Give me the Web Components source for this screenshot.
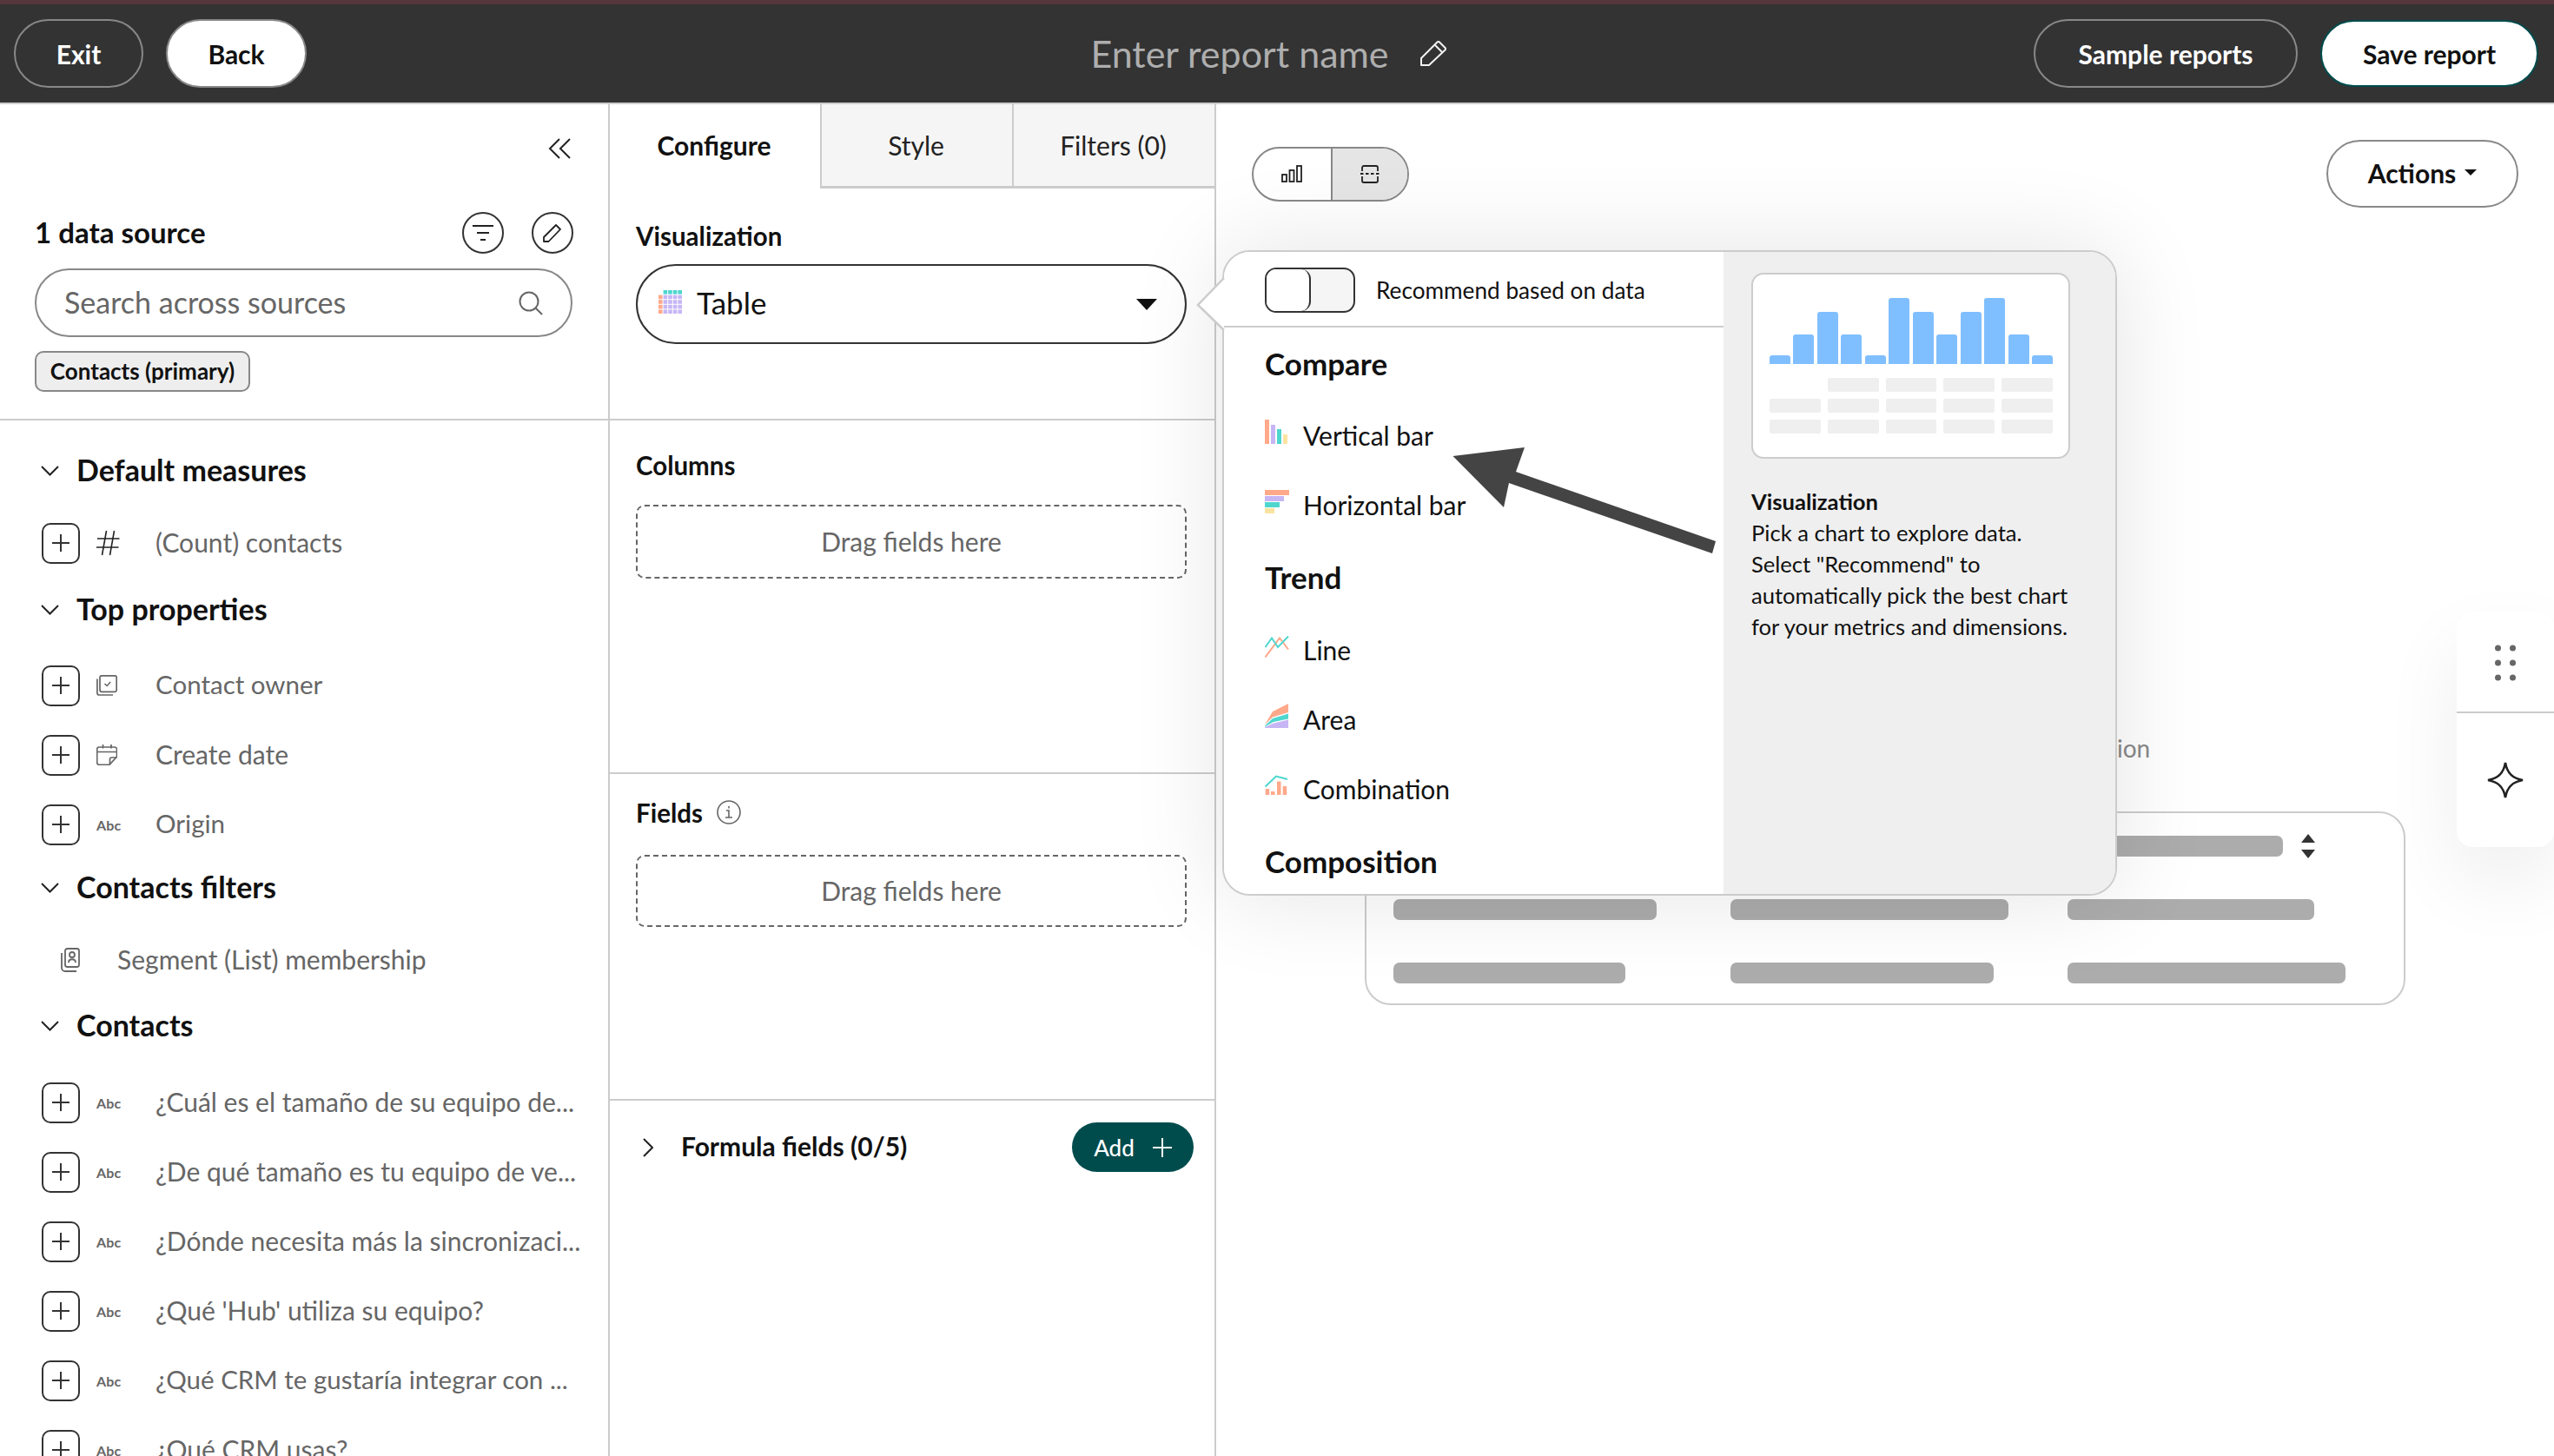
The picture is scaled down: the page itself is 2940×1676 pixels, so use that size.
<!DOCTYPE html>
<html lang="en"><head><meta charset="utf-8"><title>Report builder</title>
<style>
html,body{margin:0;padding:0;background:#fff}
body{width:2940px;height:1676px;overflow:hidden;position:relative;font-family:Lato,"Liberation Sans",sans-serif;color:#111}
</style></head><body>
<script>
function def(name,css,html){
  customElements.define(name,class extends HTMLElement{
    constructor(){super();this.attachShadow({mode:'open'});}
    connectedCallback(){ if(this._r)return; this._r=1;
      const h=typeof html==='function'?html(this):html;
      this.shadowRoot.innerHTML='<style>'+css+'</style>'+h;}
  });
}
const PLUS='<svg width="22" height="22" viewBox="0 0 22 22"><path d="M11 1v20M1 11h20" stroke="#333" stroke-width="2" fill="none"/></svg>';
const CHEV='<svg width="21" height="12" viewBox="0 0 21 12"><path d="M1 1l9.5 9.5L20 1" stroke="#222" stroke-width="2" fill="none"/></svg>';
const ICONS={
 hash:'<svg width="27" height="30" viewBox="0 0 27 30"><path d="M11.5 1L6.5 29M20.5 1l-5 28M1 10h25.500M0 20h25.500" stroke="#222" stroke-width="1.6" fill="none"/></svg>',
 owner:'<svg width="24" height="24" viewBox="0 0 24 24" fill="none" stroke="#666" stroke-width="1.7"><rect x="4" y=".8" width="19.200" height="18.500" rx="2"/><path d="M.9 4.500V20.500a2.500 2.500 0 0 0 2.500 2.500H19"/><path d="M9.500 10l2.700 2.500 4-4.500" stroke-width="1.500"/></svg>',
 date:'<svg width="24" height="24" viewBox="0 0 24 24" fill="none" stroke="#666" stroke-width="1.7"><path d="M3 3h18a2.500 2.500 0 0 1 2.500 2.500V14L15 23.300H3A2.500 2.500 0 0 1 .7 21V5.500A2.500 2.500 0 0 1 3 3Z"/><path d="M7.500 0v4.500M17 0v4.500M.8 8.500h22.700M23.500 15h-6a2 2 0 0 0-2 2v6"/></svg>',
 segment:'<svg width="22" height="28" viewBox="0 0 22 28" fill="none" stroke="#666" stroke-width="1.8"><rect x="5" y="1" width="16" height="21" rx="2.5"/><path d="M1 6v17a4 4 0 0 0 4 4h13"/><circle cx="13" cy="8" r="3"/><path d="M9 17c0-5 8-5 8 0"/></svg>',
 abc:'<span style="font:700 16px Lato,sans-serif;color:#666;letter-spacing:.2px">Abc</span>'
};
def('x-pill',`:host{display:inline-flex;align-items:center;justify-content:center;box-sizing:border-box;height:79px;border-radius:40px;border:2px solid #888;font:700 30px Lato,sans-serif;color:#fff;white-space:nowrap}
:host([light]){background:#fff;color:#111}
:host([save]){border-color:#004c4d;height:77px}
:host([plain]){background:#fff;color:#111;height:78px;padding-bottom:3px}`,`<slot></slot>`);

def('x-app-header',`:host{display:grid;grid-template-columns:1fr auto 1fr;align-items:center;box-sizing:border-box;height:120px;background:#333;border-top:5px solid #55363c;border-bottom:2px solid #ccc;padding:0 18px 0 16px}
.l,.r{display:flex;gap:26px;align-items:center}.r{justify-content:flex-end}
.c{display:flex;align-items:center;gap:36px;padding-right:18px;color:#aeaeae;font-size:43px;white-space:nowrap}`,
`<div class="l"><slot name="left"></slot></div><div class="c"><slot name="title"></slot><svg width="30" height="29" viewBox="0 0 30 29" fill="none" stroke="#f2f2f2" stroke-width="2" stroke-linejoin="round"><path d="M1 20L19.500 1.500a1.800 1.800 0 0 1 2.500 0l6.500 6.500a1.800 1.800 0 0 1 0 2.500L10 28H1z"/><path d="M17 5l8 8"/></svg></div><div class="r"><slot name="right"></slot></div>`);

def('x-round-icon',`:host{display:flex;align-items:center;justify-content:center;width:48px;height:48px;box-sizing:border-box;border:2px solid #333;border-radius:50%}`,`<slot></slot>`);

def('x-search',`:host{display:flex;align-items:center;justify-content:space-between;box-sizing:border-box;height:79px;width:619px;border:2px solid #888;border-radius:40px;padding:0 32px 0 32px;font-size:34px;color:#666}
span{display:block;margin-top:-3px}`,
`<span><slot></slot></span><svg width="28" height="28" viewBox="0 0 28 28" fill="none" stroke="#666" stroke-width="2"><circle cx="12" cy="12" r="10.5"/><path d="M19.5 19.5L27 27"/></svg>`);

def('x-chip',`:host{display:inline-flex;align-items:center;justify-content:center;box-sizing:border-box;height:47px;width:248px;background:#eee;border:2px solid #888;border-radius:10px;font:700 26px Lato,sans-serif;color:#111;white-space:nowrap;padding-bottom:2px}`,`<slot></slot>`);

def('x-source-head',`:host{display:block;box-sizing:border-box;height:364px;border-bottom:2px solid #ccc;padding:39px 40px 0 40px}
.collapse{display:flex;justify-content:flex-end;height:24px;padding-right:3px}
.row{display:flex;align-items:center;justify-content:space-between;margin-top:61px;height:48px;font:700 33px Lato,sans-serif;color:#111}
.h{display:block;margin-top:-3px}
.btns{display:flex;gap:32px}
.s{margin-top:17px}.c{margin-top:16px}`,
`<div class="collapse"><svg width="26" height="24" viewBox="0 0 26 24" fill="none" stroke="#222" stroke-width="2"><path d="M13 1L2 12l11 11M25 1L14 12l11 11"/></svg></div>
<div class="row"><span class="h"><slot name="heading"></slot></span><div class="btns"><x-round-icon><svg width="24" height="20" viewBox="0 0 24 20"><path d="M0 2h24M5 10h14M9 18h6" stroke="#222" stroke-width="2"/></svg></x-round-icon><x-round-icon><svg width="24" height="24" viewBox="0 0 24 24" fill="none" stroke="#222" stroke-width="1.8" stroke-linejoin="round"><path d="M2 17L16 3l5 5L7.500 22H2z"/></svg></x-round-icon></div></div>
<div class="s"><slot name="search"></slot></div><div class="c"><slot name="chip"></slot></div>`);

def('x-section-title',`:host{display:flex;align-items:center;height:60px;padding-left:47px;font:700 34px Lato,sans-serif;color:#111;white-space:nowrap}
svg{margin-right:20px}
span{display:block;margin-top:-3px}`,CHEV+`<span><slot></slot></span>`);

def('x-field-row',`:host{display:flex;align-items:center;height:80px;padding-left:48px;font-size:30px;color:#666;white-space:nowrap}
:host([segment]){padding-left:70px}
.plus{display:flex;align-items:center;justify-content:center;width:44px;height:47px;box-sizing:border-box;border:2px solid #333;border-radius:10px;flex:none}
.ic{flex:none;padding-left:19px;box-sizing:border-box;display:flex;align-items:center;width:87px}
:host([segment]) .ic{width:65px;padding-left:0}
.t{display:block;margin-top:-3px}`,
el=>{const t=el.getAttribute('type');const seg=t==='segment';
 if(seg)el.setAttribute('segment','');
 return (seg?'':'<div class="plus">'+PLUS+'</div>')+'<div class="ic">'+ICONS[t]+'</div><span class="t"><slot></slot></span>';});

def('x-source-panel',`:host{display:block;box-sizing:border-box;border-right:2px solid #ccc;overflow:hidden;height:100%}
.list{display:block;padding-top:28px}`,`<slot name="head"></slot><div class="list"><slot></slot></div>`);

def('x-tabs',`:host{display:grid;grid-template-columns:242px 221px 1fr;height:97px;box-sizing:border-box;font-size:30px}`,`<slot></slot>`);
def('x-tab',`:host{display:flex;align-items:center;justify-content:center;box-sizing:border-box;background:#f5f5f5;border-left:2px solid #ccc;border-bottom:3px solid #ccc;color:#222;white-space:nowrap;padding-right:2px}
:host([active]){background:#fff;border:none;font-weight:700;color:#111;padding:0 2px 3px 0}`,`<slot></slot>`);

def('x-config-section',`:host{display:block;box-sizing:border-box;border-bottom:2px solid #ccc;padding:var(--pt) 32px 0 30px}
.label{display:flex;align-items:center;height:40px;gap:16px;font:700 29.5px Lato,sans-serif;color:#111;margin-bottom:var(--gap)}`,
`<div class="label"><slot name="label"></slot></div><slot></slot>`);

def('x-drop-zone',`:host{display:flex;align-items:center;justify-content:center;box-sizing:border-box;width:634px;height:85px;border:2px dashed #666;border-radius:10px;font-size:30px;color:#666;white-space:nowrap}
span{display:block;margin-top:-2px}`,`<span><slot></slot></span>`);

function tableIcon(){let r='';
 for(let y=0;y<5;y++)for(let x=0;x<5;x++){ if(y===0&&x===0)continue;
  const col=y===0?'#4fd6cf':(x===0?'#ffa98a':'#c7b6f5');
  r+=`<rect x="${x*5.6}" y="${y*5.6}" width="4.6" height="4.6" fill="${col}"/>`;}
 return `<svg width="27" height="27" viewBox="0 0 27 27">${r}</svg>`;}
def('x-select',`:host{display:flex;align-items:center;box-sizing:border-box;width:634px;height:92px;border:2.5px solid #333;border-radius:46px;padding:0 32px 0 24px;font-size:35px;color:#111}
.i{margin:-6px 17px 0 0;display:flex}
.t{flex:1;margin-top:-4px}`,
`<span class="i">${tableIcon()}</span><span class="t"><slot></slot></span><svg width="24" height="13" viewBox="0 0 24 13"><path d="M0 0h24L12 13z" fill="#111"/></svg>`);

def('x-formula',`:host{display:flex;align-items:center;justify-content:space-between;padding:25px 24px 0 38px;font:700 30px Lato,sans-serif;color:#111;white-space:nowrap}
.l{display:flex;align-items:center;gap:32px}
.x{display:block;margin-top:-3px}`,
`<div class="l"><svg width="12" height="22" viewBox="0 0 12 22" fill="none" stroke="#222" stroke-width="2"><path d="M1 1l10 10L1 21"/></svg><span class="x"><slot></slot></span></div><slot name="action"></slot>`);
def('x-add',`:host{display:flex;align-items:center;justify-content:center;gap:21px;width:140px;height:57px;border-radius:29px;background:#004c4d;color:#fff;font:500 26px Lato,sans-serif}`,
`<slot></slot><svg width="22" height="22" viewBox="0 0 22 22"><path d="M11 0v22M0 11h22" stroke="#fff" stroke-width="2"/></svg>`);

def('x-config-panel',`:host{display:block;box-sizing:border-box;border-right:2px solid #ccc;overflow:hidden;height:100%}`,`<slot></slot>`);

def('x-view-toggle',`:host{display:grid;grid-template-columns:1fr 1fr;box-sizing:border-box;width:181px;height:63px;border:2.5px solid #888;border-radius:32px;overflow:hidden}
div{display:flex;align-items:center;justify-content:center}
.b{background:#e5e5e5;border-left:2px solid #888}`,
`<div><svg width="24" height="20" viewBox="0 0 24 20" fill="none" stroke="#222" stroke-width="1.8"><rect x="1" y="11" width="5" height="8"/><rect x="9.5" y="6" width="5" height="13"/><rect x="18" y="1" width="5" height="18"/></svg></div>
<div class="b"><svg width="22" height="21" viewBox="0 0 22 21" fill="none" stroke="#222" stroke-width="1.8"><path d="M2 7V3a2 2 0 0 1 2-2h14a2 2 0 0 1 2 2v4M2 13v5a2 2 0 0 0 2 2h14a2 2 0 0 0 2-2v-5"/><path d="M0 10h22" stroke-dasharray="3.5 2.5"/></svg></div>`);

def('x-skeleton-table',`:host{display:grid;grid-template-columns:388px 388px 1fr;row-gap:49px;box-sizing:border-box;width:1198px;height:223px;border:2.5px solid #ccc;border-radius:30px;padding:26px 0 0 31px;align-content:start}`,`<slot></slot>`);
def('x-bar',`:host{display:flex;align-items:center;gap:21px;height:24px}
i{display:block;height:24px;width:var(--w);background:#acacac;border-radius:7px}`,
el=>`<i></i>`+(el.hasAttribute('sort')?'<svg width="16" height="28" viewBox="0 0 16 28"><path d="M8 0l8 10H0zM0 18h16L8 28z" fill="#333"/></svg>':''));

def('x-canvas',`:host{display:block;padding:41px 41px 0;box-sizing:border-box;height:100%}
.top{display:flex;justify-content:space-between;align-items:center;height:78px}
.msg{margin:602px 0 0 996px;height:40px;line-height:40px;font-size:28px;color:#888}
.tbl{margin:53px 0 0 130px}`,
`<div class="top"><slot name="toggle"></slot><slot name="actions"></slot></div><div class="msg"><slot name="msg"></slot></div><div class="tbl"><slot></slot></div>`);

def('x-option',`:host{display:flex;align-items:center;height:80px;font-size:30px;color:#111;white-space:nowrap}
.i{width:44px;flex:none;display:flex;align-items:center;margin-top:-8px}`,
el=>{const s={
 v:'<svg width="28" height="28" viewBox="0 0 28 28"><rect x="0" width="5" height="28" fill="#ffa98a"/><rect x="7" y="6" width="5" height="22" fill="#c7b6f5"/><rect x="14" y="11" width="5" height="17" fill="#4fd6cf"/><rect x="21" y="17" width="5" height="11" fill="#fbe3a0"/></svg>',
 h:'<svg width="28" height="27" viewBox="0 0 28 27"><rect width="28" height="6" fill="#ffa98a"/><rect y="7" width="22" height="6" fill="#c7b6f5"/><rect y="14" width="17" height="6" fill="#4fd6cf"/><rect y="21" width="11" height="6" fill="#fbe3a0"/></svg>',
 l:'<svg width="28" height="25" viewBox="0 0 28 25" fill="none" stroke-width="2"><path d="M.5 24.500L17 2.500l10 13" stroke="#ffa98a"/><path d="M.5 13L8 2.500 15 13 27 .5" stroke="#4fd6cf"/></svg>',
 a:'<svg width="28" height="28" viewBox="0 0 28 28"><path d="M0 24L9 9 27 0V10L9 15.500 0 24Z" fill="#ffa98a"/><path d="M0 25.500L9 17 27 11.500V17.500L10 21 0 26.500Z" fill="#4fd6cf"/><path d="M0 28V27L10 22.500 27 18.500V28Z" fill="#c7b6f5"/></svg>',
 c:'<svg width="27" height="24" viewBox="0 0 27 24"><path d="M.5 13.500L13 1.500l13 3.500" fill="none" stroke="#4fd6cf" stroke-width="2"/><rect x=".7" y="16" width="4.500" height="7" fill="#ffa98a"/><rect x="7" y="19" width="4.500" height="4" fill="#ffa98a"/><rect x="14" y="7.500" width="4.500" height="15.500" fill="#ffa98a"/><rect x="20.700" y="13" width="4.500" height="10" fill="#ffa98a"/></svg>'
 }[el.getAttribute('icon')];return `<span class="i">${s}</span><slot></slot>`;});
def('x-option-head',`:host{display:flex;align-items:center;height:85px;font:700 35px Lato,sans-serif;color:#111}
span{display:block;margin-top:var(--my,0)}`,`<span><slot></slot></span>`);

function thumb(){
 const hs=[10,34,60,34,10,76,60,34,60,76,34,10];
 const bars=hs.map(h=>`<i style="height:${h}px"></i>`).join('');
 let cells='';for(let i=0;i<15;i++)cells+=i===0?'<b class="e"></b>':'<b></b>';
 return `<div class="bars">${bars}</div><div class="cells">${cells}</div>`;}
def('x-thumb',`:host{display:block;box-sizing:border-box;width:367px;height:214px;background:#fff;border:2.5px solid #ccc;border-radius:14px;padding:0 18px 0 19px}
.bars{display:flex;align-items:flex-end;justify-content:space-between;height:103px}
.bars i{display:block;width:24px;background:#80bfff;border-radius:3px 3px 0 0}
.cells{display:grid;grid-template-columns:repeat(5,1fr);gap:8px 8px;margin-top:16px}
.cells b{display:block;height:16px;background:#efefef;border-radius:2px}.cells b.e{background:none}`,thumb());

def('x-chart-popover',`:host{position:absolute;left:1407px;top:288px;width:1030px;height:743px;box-sizing:border-box;border:2.5px solid #ccc;border-radius:32px;background:#fff;box-shadow:0 0 110px rgba(0,0,0,.11);display:block;z-index:5}
.wrap{display:grid;grid-template-columns:575px 1fr;height:100%;border-radius:30px;overflow:hidden}
.left{background:#fff;overflow:hidden}
.rec{display:flex;align-items:center;gap:24px;height:87px;box-sizing:border-box;padding:2px 0 0 47px;border-bottom:2px solid #ccc;font-size:26.2px;color:#111;white-space:nowrap}
.tg{width:104px;height:52px;box-sizing:border-box;border:2px solid #333;border-radius:13px;background:#f5f5f5;flex:none;position:relative;overflow:hidden}
.tg:before{content:"";display:block;width:51px;height:48px;box-sizing:border-box;background:#fff;border-right:2px solid #333;border-radius:0 11px 11px 0}
.list{padding-left:47px}
.right{background:#efefef;padding:24px 0 0 32px;font-size:25.6px;line-height:36px;color:#111;white-space:nowrap}
.desc{margin-top:31px}
.beak{position:absolute;left:-32px;top:29px}`,
`<svg class="beak" width="34" height="62" viewBox="0 0 34 62"><path d="M32 1L2 32l30 29z" fill="#fff"/><path d="M32 1L2 32l30 29" fill="none" stroke="#ccc" stroke-width="2.5"/></svg>
<div class="wrap"><div class="left"><div class="rec"><span class="tg"></span><slot name="rec"></slot></div><div class="list"><slot></slot></div></div>
<div class="right"><slot name="thumb"></slot><div class="desc"><slot name="desc"></slot></div></div></div>`);

def('x-annotation-arrow',`:host{position:absolute;left:1660px;top:505px;width:330px;height:150px;z-index:6;display:block}`,
`<svg width="330" height="150" viewBox="1660 505 330 150"><path d="M1672.5 525L1755 515l-10 28 230 80-4 14-234-81-6 28z" fill="#444"/></svg>`);

def('x-side-widget',`:host{position:absolute;right:0;top:704px;width:112px;height:271px;background:#fff;border-radius:18px;box-shadow:0 40px 90px rgba(0,0,0,.07);display:block;z-index:2}
.a{height:113px;border-bottom:2px solid #ccc;display:flex;align-items:center;justify-content:center;padding-top:2px;box-sizing:content-box}
.b{height:154px;display:flex;align-items:center;justify-content:center}`,
`<div class="a"><svg width="24" height="42" viewBox="0 0 24 42" fill="#666"><circle cx="3.500" cy="4" r="3.500"/><circle cx="20.500" cy="4" r="3.500"/><circle cx="3.500" cy="21" r="3.500"/><circle cx="20.500" cy="21" r="3.500"/><circle cx="3.500" cy="38" r="3.500"/><circle cx="20.500" cy="38" r="3.500"/></svg></div>
<div class="b"><svg width="42" height="42" viewBox="0 0 42 42" fill="none" stroke="#222" stroke-width="2.6"><path d="M21 1C23 13 29 19 41 21 29 23 23 29 21 41 19 29 13 23 1 21 13 19 19 13 21 1Z"/></svg></div>`);

def('x-workspace',`:host{display:grid;grid-template-columns:702px 698px 1fr;height:1556px;overflow:hidden}`,`<slot></slot>`);
</script>

<x-app-header>
  <x-pill slot="left" style="width:149px">Exit</x-pill>
  <x-pill slot="left" light style="width:162px">Back</x-pill>
  <span slot="title">Enter report name</span>
  <x-pill slot="right" style="width:304px">Sample reports</x-pill>
  <x-pill slot="right" light save style="width:251px">Save report</x-pill>
</x-app-header>

<x-workspace>
  <x-source-panel>
    <x-source-head slot="head">
      <span slot="heading">1 data source</span>
      <x-search slot="search">Search across sources</x-search>
      <x-chip slot="chip">Contacts (primary)</x-chip>
    </x-source-head>
    <x-section-title>Default measures</x-section-title>
    <x-field-row type="hash" style="margin-top:13px">(Count) contacts</x-field-row>
    <x-section-title style="margin-top:7px">Top properties</x-section-title>
    <x-field-row type="owner" style="margin-top:17px;font-size:29.5px">Contact owner</x-field-row>
    <x-field-row type="date">Create date</x-field-row>
    <x-field-row type="abc" style="font-size:29.5px">Origin</x-field-row>
    <x-section-title style="margin-top:3px">Contacts filters</x-section-title>
    <x-field-row type="segment" style="margin-top:13px">Segment (List) membership</x-field-row>
    <x-section-title style="margin-top:6px">Contacts</x-section-title>
    <x-field-row type="abc" style="margin-top:18px">¿Cuál es el tamaño de su equipo de...</x-field-row>
    <x-field-row type="abc">¿De qué tamaño es tu equipo de ve...</x-field-row>
    <x-field-row type="abc">¿Dónde necesita más la sincronizaci...</x-field-row>
    <x-field-row type="abc">¿Qué 'Hub' utiliza su equipo?</x-field-row>
    <x-field-row type="abc" style="font-size:29.5px">¿Qué CRM te gustaría integrar con ...</x-field-row>
    <x-field-row type="abc">¿Qué CRM usas?</x-field-row>
  </x-source-panel>

  <x-config-panel>
    <x-tabs><x-tab active>Configure</x-tab><x-tab>Style</x-tab><x-tab>Filters (0)</x-tab></x-tabs>
    <x-config-section style="--pt:34px;--gap:13px;height:267px">
      <span slot="label">Visualization</span>
      <x-select>Table</x-select>
    </x-config-section>
    <x-config-section style="--pt:31px;--gap:26px;height:407px">
      <span slot="label">Columns</span>
      <x-drop-zone>Drag fields here</x-drop-zone>
    </x-config-section>
    <x-config-section style="--pt:24px;--gap:29px;height:376px">
      <span slot="label">Fields</span>
      <svg slot="label" width="28" height="28" viewBox="0 0 28 28" fill="none" stroke="#666" stroke-width="1.6"><circle cx="14" cy="14" r="13"/><path d="M11 12h3v8M10 20h8M14 7v2.5"/></svg>
      <x-drop-zone style="height:83px">Drag fields here</x-drop-zone>
    </x-config-section>
    <x-formula>Formula fields (0/5)<x-add slot="action">Add</x-add></x-formula>
  </x-config-panel>

  <x-canvas>
    <x-view-toggle slot="toggle"></x-view-toggle>
    <x-pill slot="actions" plain style="width:221px;font-size:30px">Actions<svg style="margin-left:10px" width="14" height="7" viewBox="0 0 14 7"><path d="M0 0h14L7 7z" fill="#111"/></svg></x-pill>
    <span slot="msg">ion</span>
    <x-skeleton-table>
      <x-bar style="--w:300px"></x-bar><x-bar style="--w:320px"></x-bar><x-bar sort style="--w:248px"></x-bar>
      <x-bar style="--w:303px"></x-bar><x-bar style="--w:320px"></x-bar><x-bar style="--w:284px"></x-bar>
      <x-bar style="--w:267px"></x-bar><x-bar style="--w:303px"></x-bar><x-bar style="--w:320px"></x-bar>
    </x-skeleton-table>
  </x-canvas>
</x-workspace>

<x-side-widget></x-side-widget>

<x-chart-popover>
  <span slot="rec">Recommend based on data</span>
  <x-option-head style="height:84px;--my:-2px">Compare</x-option-head>
  <x-option icon="v">Vertical bar</x-option>
  <x-option icon="h">Horizontal bar</x-option>
  <x-option-head style="height:87px;--my:-2px">Trend</x-option-head>
  <x-option icon="l">Line</x-option>
  <x-option icon="a">Area</x-option>
  <x-option icon="c">Combination</x-option>
  <x-option-head>Composition</x-option-head>
  <x-thumb slot="thumb"></x-thumb>
  <span slot="desc"><b>Visualization</b><br>Pick a chart to explore data.<br>Select "Recommend" to<br>automatically pick the best chart<br>for your metrics and dimensions.</span>
</x-chart-popover>
<x-annotation-arrow></x-annotation-arrow>
</body></html>
